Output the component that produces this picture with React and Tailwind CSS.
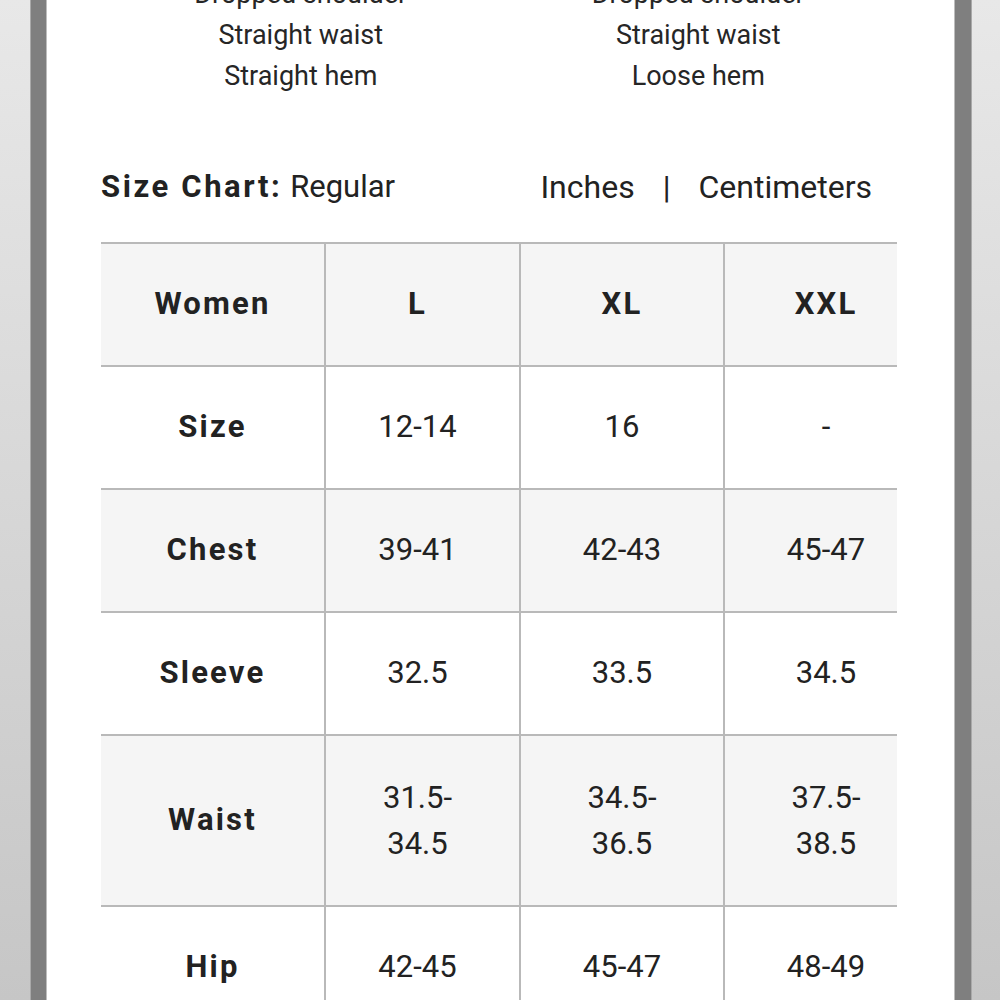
import React from 'react';

const rows = [
  { label: 'Size', values: ['12-14', '16', '-'], shade: false },
  { label: 'Chest', values: ['39-41', '42-43', '45-47'], shade: true },
  { label: 'Sleeve', values: ['32.5', '33.5', '34.5'], shade: false },
  { label: 'Waist', values: [['31.5-', '34.5'], ['34.5-', '36.5'], ['37.5-', '38.5']], shade: true, tall: true },
  { label: 'Hip', values: ['42-45', '45-47', '48-49'], shade: false },
];

const colPad = ['', 'pr-[10px]', '', ''];

const Cell = ({ children, col, bold, shade, tall }) => (
  <div
    className={`flex flex-col items-center justify-center border-t-2 border-[#b9b9b9] ${
      col > 0 ? 'border-l-2' : ''
    } ${tall ? 'h-[171px]' : 'h-[123px]'} ${shade ? 'bg-[#f5f5f5]' : 'bg-white'} ${colPad[col]} ${
      bold ? 'font-bold tracking-[2.2px]' : ''
    }`}
  >
    {Array.isArray(children) ? (
      children.map((line) => (
        <span key={line} className="leading-[46px]">
          {line}
        </span>
      ))
    ) : (
      <span>{children}</span>
    )}
  </div>
);

export default function App() {
  return (
    <div className="flex h-[1000px] w-[1000px] overflow-hidden bg-white font-['Roboto','Liberation_Sans',sans-serif] text-[#222]">
      <div className="w-[30px] bg-gradient-to-b from-[#e8e8e8] to-[#c6c6c6]" />
      <div className="w-[1px] bg-[#a9a9a9]" />
      <div className="w-[15px] bg-[#7f7f7f]" />
      <div className="w-[1px] bg-[#bdbdbd]" />

      <div className="flex-1 bg-white px-[54px]">
        {/* fit notes, scrolled so the first line sits above the top edge */}
        <div className="mt-[-26px] grid grid-cols-2 text-center text-[27px] leading-[41px] text-[#262626]">
          <div>
            <p>Dropped shoulder</p>
            <p>Straight waist</p>
            <p>Straight hem</p>
          </div>
          <div className="pr-[4px]">
            <p>Dropped shoulder</p>
            <p>Straight waist</p>
            <p>Loose hem</p>
          </div>
        </div>

        <div className="mt-[70px] flex h-[40px] items-center justify-between pr-[28px]">
          <p className="text-[31px]">
            <span className="font-bold tracking-[2.6px]">Size Chart:</span> Regular
          </p>
          <p className="flex items-center gap-[28px] text-[32px]">
            <span>Inches</span>
            <span>|</span>
            <span>Centimeters</span>
          </p>
        </div>

        <div className="mt-[35px] w-[796px] overflow-hidden">
          <div className="grid w-[826px] grid-cols-[223px_195px_204px_204px] text-[31px]">
            <Cell col={0} bold shade>Women</Cell>
            <Cell col={1} bold shade>L</Cell>
            <Cell col={2} bold shade>XL</Cell>
            <Cell col={3} bold shade>XXL</Cell>
            {rows.map((row) => (
              <React.Fragment key={row.label}>
                <Cell col={0} bold shade={row.shade} tall={row.tall}>
                  {row.label}
                </Cell>
                {row.values.map((v, i) => (
                  <Cell key={i} col={i + 1} shade={row.shade} tall={row.tall}>
                    {v}
                  </Cell>
                ))}
              </React.Fragment>
            ))}
          </div>
        </div>
      </div>

      <div className="w-[1px] bg-[#bdbdbd]" />
      <div className="w-[16px] bg-[#7f7f7f]" />
      <div className="w-[1px] bg-[#a9a9a9]" />
      <div className="w-[28px] bg-gradient-to-b from-[#e8e8e8] to-[#c6c6c6]" />
    </div>
  );
}
